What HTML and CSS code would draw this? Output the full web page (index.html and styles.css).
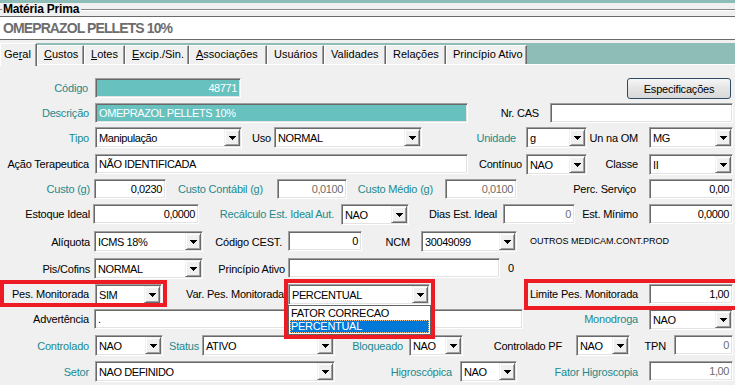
FILE: index.html
```html
<!DOCTYPE html>
<html lang="pt-BR">
<head>
<meta charset="utf-8">
<title>Matéria Prima</title>
<link rel="stylesheet" href="styles.css">
</head>
<body>
<div class="window">
  <div class="top-band"></div>
  <div class="group">
    <div class="group-head"><span class="group-title">Matéria Prima</span></div>
    <div class="title-box">OMEPRAZOL PELLETS 10%</div>
  </div>
  <div class="tabs">
    <div class="tab t-geral active">Ge<u>r</u>al</div>
    <div class="tab t-custos"><u>C</u>ustos</div>
    <div class="tab t-lotes"><u>L</u>otes</div>
    <div class="tab t-excip"><u>E</u>xcip./Sin.</div>
    <div class="tab t-assoc"><u>A</u>ssociações</div>
    <div class="tab t-usu">Usuários</div>
    <div class="tab t-valid">Validades</div>
    <div class="tab t-rel">Relações</div>
    <div class="tab t-princ">Princípio Ativo</div>
  </div>
  <div class="panel">
    <div class="row r1">
      <span class="lbl teal l-codigo">Código</span>
      <div class="field tealbg num f-codigo">48771</div>
      <button class="btn f-espec">Especificações</button>
    </div>
    <div class="row r2">
      <span class="lbl teal l-descricao">Descrição</span>
      <div class="field tealbg f-descricao">OMEPRAZOL PELLETS 10%</div>
      <span class="lbl l-nrcas">Nr. CAS</span>
      <div class="field f-nrcas"></div>
    </div>
    <div class="row r3">
      <span class="lbl teal l-tipo">Tipo</span>
      <div class="combo f-tipo"><span class="val">Manipulação</span><span class="drop"><svg width="7" height="4" viewBox="0 0 7 4"><path d="M0 0h7v1H0zM1 1h5v1H1zM2 2h3v1H2zM3 3h1v1H3z"/></svg></span></div>
      <span class="lbl l-uso">Uso</span>
      <div class="combo f-uso"><span class="val">NORMAL</span><span class="drop"><svg width="7" height="4" viewBox="0 0 7 4"><path d="M0 0h7v1H0zM1 1h5v1H1zM2 2h3v1H2zM3 3h1v1H3z"/></svg></span></div>
      <span class="lbl teal l-unidade">Unidade</span>
      <div class="combo f-unidade"><span class="val">g</span><span class="drop"><svg width="7" height="4" viewBox="0 0 7 4"><path d="M0 0h7v1H0zM1 1h5v1H1zM2 2h3v1H2zM3 3h1v1H3z"/></svg></span></div>
      <span class="lbl l-unom">Un na OM</span>
      <div class="combo f-unom"><span class="val">MG</span><span class="drop"><svg width="7" height="4" viewBox="0 0 7 4"><path d="M0 0h7v1H0zM1 1h5v1H1zM2 2h3v1H2zM3 3h1v1H3z"/></svg></span></div>
    </div>
    <div class="row r4">
      <span class="lbl l-acao">Ação Terapeutica</span>
      <div class="field f-acao">NÃO IDENTIFICADA</div>
      <span class="lbl l-continuo">Contínuo</span>
      <div class="combo f-continuo"><span class="val">NAO</span><span class="drop"><svg width="7" height="4" viewBox="0 0 7 4"><path d="M0 0h7v1H0zM1 1h5v1H1zM2 2h3v1H2zM3 3h1v1H3z"/></svg></span></div>
      <span class="lbl l-classe">Classe</span>
      <div class="combo f-classe"><span class="val">II</span><span class="drop"><svg width="7" height="4" viewBox="0 0 7 4"><path d="M0 0h7v1H0zM1 1h5v1H1zM2 2h3v1H2zM3 3h1v1H3z"/></svg></span></div>
    </div>
    <div class="row r5">
      <span class="lbl teal l-custo">Custo (g)</span>
      <div class="field num f-custo">0,0230</div>
      <span class="lbl teal l-custocont">Custo Contábil (g)</span>
      <div class="field num dis f-custocont">0,0100</div>
      <span class="lbl teal l-customed">Custo Médio (g)</span>
      <div class="field num dis f-customed">0,0100</div>
      <span class="lbl l-perc">Perc. Serviço</span>
      <div class="field num f-perc">0,00</div>
    </div>
    <div class="row r6">
      <span class="lbl l-estoque">Estoque Ideal</span>
      <div class="field num f-estoque">0,0000</div>
      <span class="lbl teal l-recalc">Recálculo Est. Ideal Aut.</span>
      <div class="combo f-recalc"><span class="val">NAO</span><span class="drop"><svg width="7" height="4" viewBox="0 0 7 4"><path d="M0 0h7v1H0zM1 1h5v1H1zM2 2h3v1H2zM3 3h1v1H3z"/></svg></span></div>
      <span class="lbl l-dias">Dias Est. Ideal</span>
      <div class="field num dis f-dias">0</div>
      <span class="lbl l-estmin">Est. Mínimo</span>
      <div class="field num f-estmin">0,0000</div>
    </div>
    <div class="row r7">
      <span class="lbl l-aliq">Alíquota</span>
      <div class="combo f-aliq"><span class="val">ICMS 18%</span><span class="drop"><svg width="7" height="4" viewBox="0 0 7 4"><path d="M0 0h7v1H0zM1 1h5v1H1zM2 2h3v1H2zM3 3h1v1H3z"/></svg></span></div>
      <span class="lbl l-cest">Código CEST.</span>
      <div class="field num f-cest">0</div>
      <span class="lbl l-ncm">NCM</span>
      <div class="combo f-ncm"><span class="val">30049099</span><span class="drop"><svg width="7" height="4" viewBox="0 0 7 4"><path d="M0 0h7v1H0zM1 1h5v1H1zM2 2h3v1H2zM3 3h1v1H3z"/></svg></span></div>
      <span class="note">OUTROS MEDICAM.CONT.PROD</span>
    </div>
    <div class="row r8">
      <span class="lbl l-pis">Pis/Cofins</span>
      <div class="combo f-pis"><span class="val">NORMAL</span><span class="drop"><svg width="7" height="4" viewBox="0 0 7 4"><path d="M0 0h7v1H0zM1 1h5v1H1zM2 2h3v1H2zM3 3h1v1H3z"/></svg></span></div>
      <span class="lbl l-princ">Princípio Ativo</span>
      <div class="field f-princ"></div>
      <span class="count">0</span>
    </div>
    <div class="row r9">
      <span class="lbl l-pes">Pes. Monitorada</span>
      <div class="combo f-pes"><span class="val">SIM</span><span class="drop"><svg width="7" height="4" viewBox="0 0 7 4"><path d="M0 0h7v1H0zM1 1h5v1H1zM2 2h3v1H2zM3 3h1v1H3z"/></svg></span></div>
      <span class="lbl l-varpes">Var. Pes. Monitorada</span>
      <div class="combo f-varpes"><span class="val">PERCENTUAL</span><span class="drop"><svg width="7" height="4" viewBox="0 0 7 4"><path d="M0 0h7v1H0zM1 1h5v1H1zM2 2h3v1H2zM3 3h1v1H3z"/></svg></span></div>
      <span class="lbl l-limite">Limite Pes. Monitorada</span>
      <div class="field num f-limite">1,00</div>
    </div>
    <div class="row r10">
      <span class="lbl l-advert">Advertência</span>
      <div class="field f-advert">.</div>
      <span class="lbl teal l-mono">Monodroga</span>
      <div class="combo f-mono"><span class="val">NAO</span><span class="drop"><svg width="7" height="4" viewBox="0 0 7 4"><path d="M0 0h7v1H0zM1 1h5v1H1zM2 2h3v1H2zM3 3h1v1H3z"/></svg></span></div>
    </div>
    <div class="row r11">
      <span class="lbl teal l-control">Controlado</span>
      <div class="combo f-control"><span class="val">NAO</span><span class="drop"><svg width="7" height="4" viewBox="0 0 7 4"><path d="M0 0h7v1H0zM1 1h5v1H1zM2 2h3v1H2zM3 3h1v1H3z"/></svg></span></div>
      <span class="lbl teal l-status">Status</span>
      <div class="combo f-status"><span class="val">ATIVO</span><span class="drop"><svg width="7" height="4" viewBox="0 0 7 4"><path d="M0 0h7v1H0zM1 1h5v1H1zM2 2h3v1H2zM3 3h1v1H3z"/></svg></span></div>
      <span class="lbl teal l-bloq">Bloqueado</span>
      <div class="combo f-bloq"><span class="val">NAO</span><span class="drop"><svg width="7" height="4" viewBox="0 0 7 4"><path d="M0 0h7v1H0zM1 1h5v1H1zM2 2h3v1H2zM3 3h1v1H3z"/></svg></span></div>
      <span class="lbl l-contpf">Controlado PF</span>
      <div class="combo f-contpf"><span class="val">NAO</span><span class="drop"><svg width="7" height="4" viewBox="0 0 7 4"><path d="M0 0h7v1H0zM1 1h5v1H1zM2 2h3v1H2zM3 3h1v1H3z"/></svg></span></div>
      <span class="lbl l-tpn">TPN</span>
      <div class="field num dis f-tpn">0</div>
    </div>
    <div class="row r12">
      <span class="lbl teal l-setor">Setor</span>
      <div class="combo f-setor"><span class="val">NAO DEFINIDO</span><span class="drop"><svg width="7" height="4" viewBox="0 0 7 4"><path d="M0 0h7v1H0zM1 1h5v1H1zM2 2h3v1H2zM3 3h1v1H3z"/></svg></span></div>
      <span class="lbl teal l-higro">Higroscópica</span>
      <div class="combo f-higro"><span class="val">NAO</span><span class="drop"><svg width="7" height="4" viewBox="0 0 7 4"><path d="M0 0h7v1H0zM1 1h5v1H1zM2 2h3v1H2zM3 3h1v1H3z"/></svg></span></div>
      <span class="lbl teal l-fator">Fator Higroscopia</span>
      <div class="field num dis f-fator">1,00</div>
    </div>
  </div>

  <div class="droplist">
    <div class="opt">FATOR CORRECAO</div>
    <div class="opt selected">PERCENTUAL</div>
  </div>
  <div class="mark mark-pes"></div>
  <div class="mark mark-var"></div>
  <div class="mark mark-lim"></div>
</div>
</body>
</html>
```

FILE: styles.css
```css
* { box-sizing: border-box; }
html, body { margin: 0; padding: 0; }
body {
  width: 735px; height: 385px; overflow: hidden;
  background: #f0f0f0;
  font-family: "Liberation Sans", Arial, sans-serif;
  font-size: 11px; color: #000;
}
.window { position: relative; width: 735px; height: 385px; overflow: hidden; }

.top-band { height: 3px; background: #8ebcb6; }

.group-head { display: flex; align-items: center; height: 13px; }
.group-head::before { content: ""; width: 2px; border-top: 1px solid #8a8a8a; }
.group-head::after { content: ""; flex: 1; border-top: 1px solid #8a8a8a; border-bottom: 1px solid #fff; }
.group-title { font-weight: bold; font-size: 12px; letter-spacing: -0.2px; padding: 0 2px 0 1px; line-height: 13px; }
.title-box {
  height: 24px; background: #fff;
  border-top: 1px solid #6a6a6a; border-bottom: 1px solid #6a6a6a;
  color: #6d6d6d; font-weight: bold; font-size: 14px; letter-spacing: -0.9px;
  padding-left: 3px; line-height: 22px;
}

.tabs { display: flex; height: 21px; margin-top: 3px; background: #8ebcb6; position: relative; z-index: 2; }
.tab {
  margin-top: 2px; height: 19px; background: #f0f0f0;
  border-left: 1px solid #fff; border-top: 1px solid #fff; border-right: 1px solid #696969;
  box-shadow: inset -1px 0 0 #a0a0a0;
  padding-left: 6px; line-height: 17px; white-space: nowrap;
}
.tab.active { margin-top: 0; height: 23px; padding-left: 3px; line-height: 20px; }
.tab u { text-decoration: underline; text-underline-offset: 1px; }
.t-geral { width: 37px; }
.t-custos { width: 47px; }
.t-lotes { width: 41px; }
.t-excip { width: 64px; }
.t-assoc { width: 78px; }
.t-usu { width: 57px; }
.t-valid { width: 62px; }
.t-rel { width: 60px; }
.t-princ { width: 81px; }

.panel { border-top: 1px solid #fff; padding-top: 13px; }

.row { display: flex; align-items: flex-start; }
.r1 { height: 25px; }
.r2 { height: 24px; }
.r3 { height: 27px; }
.r4 { height: 25px; }
.r5 { height: 25px; }
.r6 { height: 27px; }
.r7 { height: 27px; }
.r8 { height: 26px; }
.r9 { height: 25px; }
.r10 { height: 26px; }
.r11 { height: 26px; }
.r12 { height: 22px; }

.lbl {
  display: flex; align-items: center; justify-content: flex-end;
  height: 20px; padding-right: 5px; white-space: nowrap; letter-spacing: -0.2px;
  flex: none;
}
.teal { color: #1b8a8e; }

.field, .combo {
  flex: none; height: 20px; background: #fff;
  border-top: 1px solid #a0a0a0; border-left: 1px solid #a0a0a0;
  border-bottom: 1px solid #fff; border-right: 1px solid #fff;
  box-shadow: inset 1px 1px 0 #696969, inset -1px -1px 0 #e3e3e3;
  white-space: nowrap; overflow: hidden;
  letter-spacing: -0.4px;
}
.field { padding: 0 3px; line-height: 18px; }
.field.num { text-align: right; }
.field.dis { color: #6d6d6d; }
.field.tealbg { background: #66c1bf; color: #fff; }
.combo { height: 21px; display: flex; align-items: center; }
.combo .val { flex: 1; padding-left: 3px; overflow: hidden; }
.combo .drop {
  width: 16px; height: 17px; margin-right: 1px; flex: none;
  background: #f0f0f0;
  border-top: 1px solid #f0f0f0; border-left: 1px solid #f0f0f0;
  border-right: 1px solid #696969; border-bottom: 1px solid #696969;
  box-shadow: inset 1px 1px 0 #fff, inset -1px -1px 0 #a0a0a0;
  display: flex; align-items: center; justify-content: center;
}
.combo .drop svg { display: block; }

.btn {
  flex: none; height: 21px; width: 104px; margin-left: 386px;
  font-family: inherit; font-size: 11px; letter-spacing: -0.2px; color: #000;
  border: 1px solid #2f4a63; border-radius: 3px;
  background: linear-gradient(#f6f6f6, #e4e4e4 50%, #d9d9d9);
  padding: 0;
}

.note { font-size: 9px; margin-left: 13px; line-height: 21px; }
.count { margin-left: 8px; line-height: 20px; }

/* row 1 */
.l-codigo { width: 95px; padding-right: 7px; }
.f-codigo { width: 146px; }
/* row 2 */
.l-descricao { width: 95px; padding-right: 6px; }
.f-descricao { width: 373px; }
.l-nrcas { width: 82px; padding-right: 11px; }
.f-nrcas { width: 183px; }
/* row 3 */
.l-tipo { width: 95px; padding-right: 6px; height: 21px; }
.f-tipo { width: 147px; }
.l-uso { width: 32px; padding-right: 3px; height: 21px; }
.f-uso { width: 148px; }
.l-unidade { width: 104px; padding-right: 10px; height: 21px; }
.f-unidade { width: 61px; }
.l-unom { width: 62px; padding-right: 11px; height: 21px; }
.f-unom { width: 84px; }
/* row 4 */
.l-acao { width: 95px; padding-right: 6px; }
.f-acao { width: 373px; }
.l-continuo { width: 58px; padding-right: 4px; }
.f-continuo { width: 61px; }
.l-classe { width: 62px; padding-right: 11px; }
.f-classe { width: 84px; }
/* row 5 */
.l-custo { width: 94px; padding-right: 4px; }
.f-custo { width: 72px; }
.l-custocont { width: 111px; padding-right: 14px; }
.f-custocont { width: 70px; }
.l-customed { width: 98px; padding-right: 12px; }
.f-customed { width: 72px; }
.l-perc { width: 132px; padding-right: 13px; }
.f-perc { width: 84px; }
/* row 6 */
.l-estoque { width: 93px; padding-right: 3px; }
.f-estoque { width: 106px; }
.l-recalc { width: 142px; padding-right: 7px; }
.f-recalc { width: 68px; }
.l-dias { width: 94px; padding-right: 6px; }
.f-dias { width: 72px; }
.l-estmin { width: 74px; padding-right: 11px; }
.f-estmin { width: 84px; }
/* row 7 */
.l-aliq { width: 94px; padding-right: 4px; height: 21px; }
.f-aliq { width: 109px; }
.l-cest { width: 85px; padding-right: 6px; height: 21px; }
.f-cest { width: 74px; }
.l-ncm { width: 59px; padding-right: 11px; height: 21px; }
.f-ncm { width: 96px; }
/* row 8 */
.l-pis { width: 94px; padding-right: 4px; height: 21px; }
.f-pis { width: 109px; }
.l-princ { width: 85px; padding-right: 3px; height: 21px; }
.f-princ { width: 212px; }
/* row 9 */
.l-pes { width: 95px; padding-right: 6px; }
.f-pes { width: 67px; }
.l-varpes { width: 126px; padding-right: 4px; }
.f-varpes { width: 142px; }
.l-limite { width: 219px; padding-right: 11px; }
.f-limite { width: 84px; }
/* row 10 */
.l-advert { width: 94px; padding-right: 5px; }
.f-advert { width: 429px; }
.l-mono { width: 126px; padding-right: 11px; }
.f-mono { width: 84px; }
/* row 11 */
.l-control { width: 95px; padding-right: 6px; height: 21px; }
.f-control { width: 68px; }
.l-status { width: 39px; padding-right: 3px; height: 21px; }
.f-status { width: 133px; }
.l-bloq { width: 74px; padding-right: 6px; height: 21px; }
.f-bloq { width: 54px; }
.l-contpf { width: 113px; padding-right: 14px; height: 21px; }
.f-contpf { width: 54px; }
.l-tpn { width: 44px; padding-right: 8px; height: 21px; }
.f-tpn { width: 59px; }
/* row 12 */
.l-setor { width: 95px; padding-right: 6px; height: 21px; }
.f-setor { width: 240px; }
.l-higro { width: 125px; padding-right: 8px; height: 21px; }
.f-higro { width: 57px; }
.l-fator { width: 132px; padding-right: 11px; height: 21px; }
.f-fator { width: 84px; }

/* overlays */
.droplist {
  position: absolute; left: 288px; top: 305px; width: 143px; height: 30px;
  background: #fff; border: 1px solid #646464; padding: 1px;
  letter-spacing: -0.3px; z-index: 4;
}
.opt { height: 13px; line-height: 13px; padding-left: 1px; white-space: nowrap; }
.opt.selected { background: #0078d7; color: #fff; outline: 1px dotted #f6c28b; outline-offset: -1px; }

.mark { position: absolute; border: 4px solid #ed1c24; z-index: 5; }
.mark-pes { left: 0; top: 280px; width: 167px; height: 27px; }
.mark-var { left: 284px; top: 279px; width: 151px; height: 60px; }
.mark-lim { left: 524px; top: 279px; width: 215px; height: 31px; }
```
